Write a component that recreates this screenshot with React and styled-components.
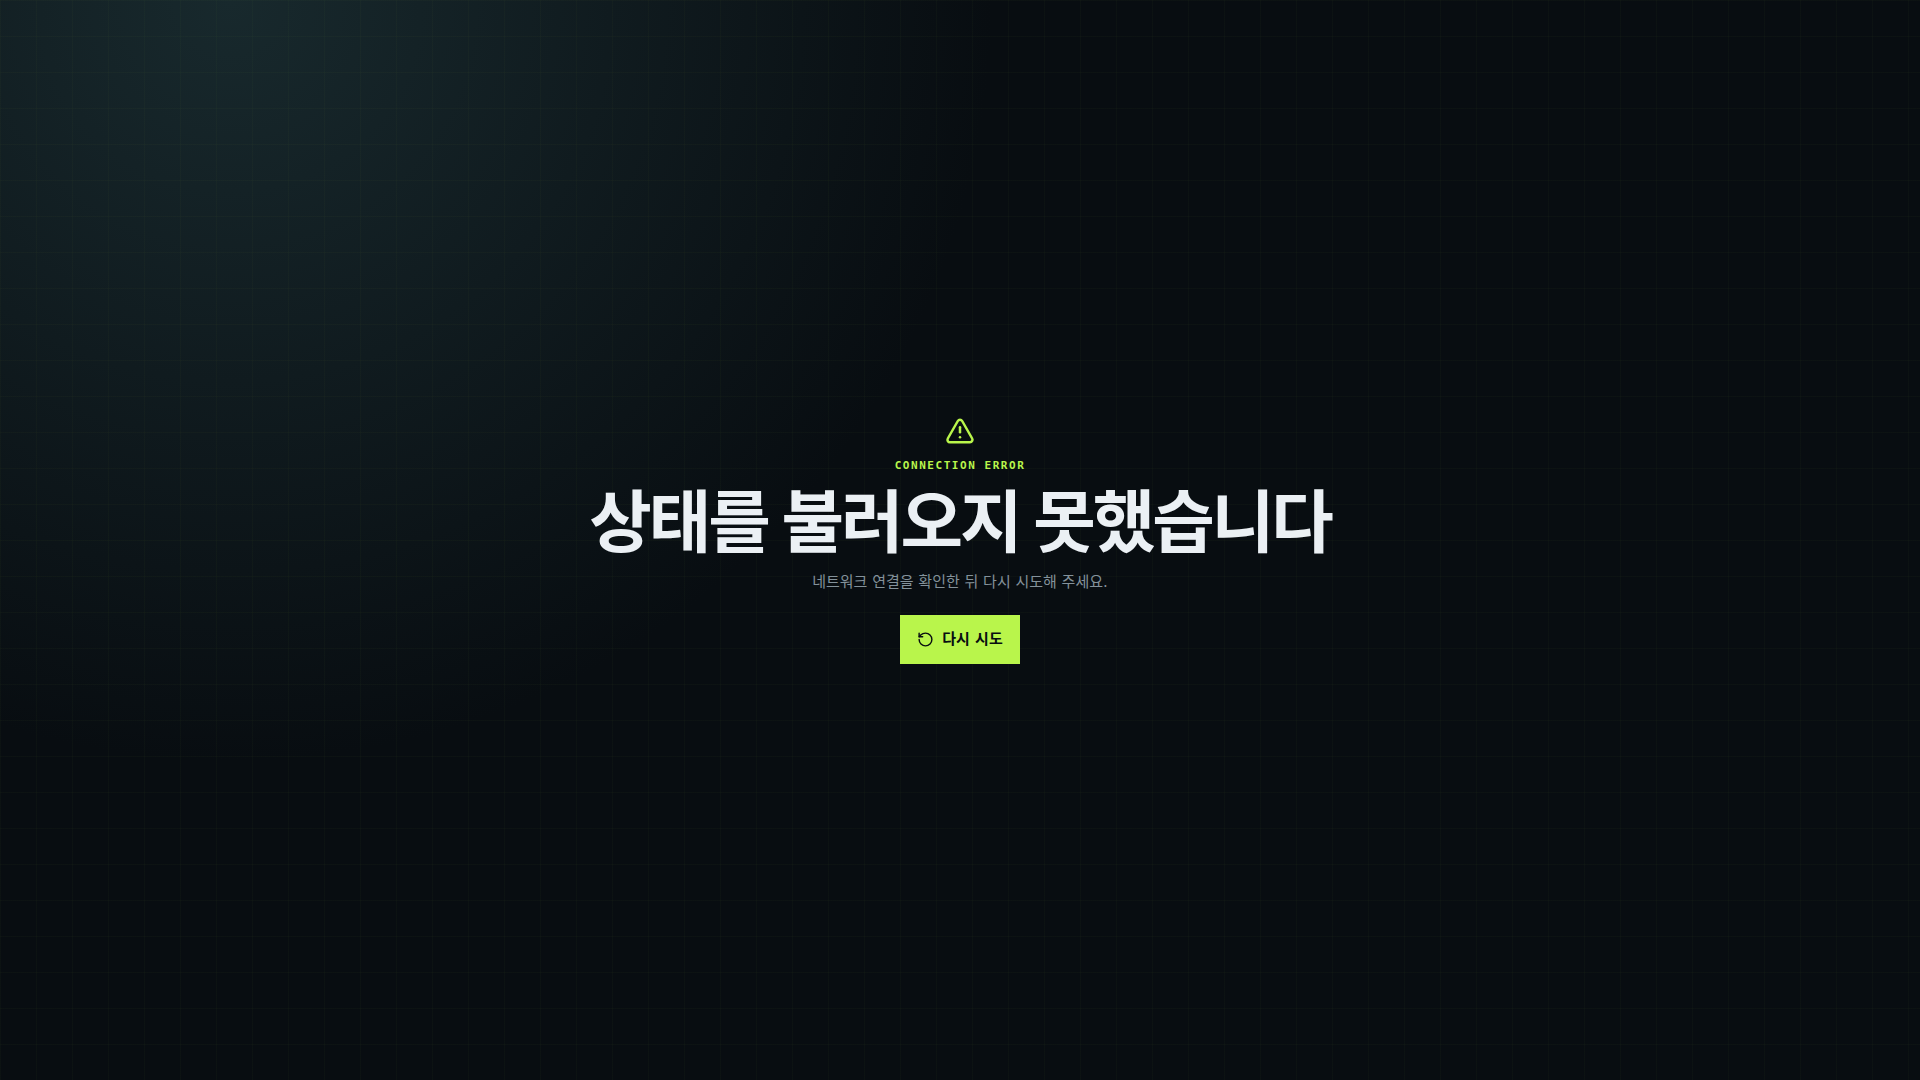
import React from 'react'
import styled, { createGlobalStyle } from 'styled-components'
import { RotateCcw, TriangleAlert } from 'lucide-react'

const App = () => {
    return (
        <>
            <GlobalStyle />
            <ErrorPage lang="ko">
                <TriangleAlert size={30} aria-hidden="true" />
                <Eyebrow>CONNECTION ERROR</Eyebrow>
                <Title>상태를 불러오지 못했습니다</Title>
                <Message>네트워크 연결을 확인한 뒤 다시 시도해 주세요.</Message>
                <RetryButton type="button" onClick={() => window.location.reload()}>
                    <RotateCcw size={17} aria-hidden="true" />
                    다시 시도
                </RetryButton>
            </ErrorPage>
        </>
    )
}

const GlobalStyle = createGlobalStyle`
    * {
        box-sizing: border-box;
    }

    body {
        margin: 0;
        background-color: #080d11;
        color: #ebf0f4;
        font-family: "DejaVu Sans", "Noto Sans CJK KR", sans-serif;
    }
`

const ErrorPage = styled.main`
    min-height: 100vh;
    padding: 24px;
    display: flex;
    flex-direction: column;
    justify-content: center;
    align-items: center;
    text-align: center;
    color: #b9f54b;
    background:
        linear-gradient(rgba(185, 245, 75, 0.025) 1px, transparent 1px) 0 0 / 36px 36px,
        linear-gradient(90deg, rgba(185, 245, 75, 0.025) 1px, transparent 1px) 0 0 / 36px 36px,
        radial-gradient(circle at 12% 0, #18292d 0, transparent 38%),
        #080d11;
`

const Eyebrow = styled.p`
    margin: 12px 0 0;
    font-family: "DejaVu Sans Mono", monospace;
    font-size: 11px;
    font-weight: 700;
    line-height: 15px;
    letter-spacing: 0.14em;
`

const Title = styled.h1`
    margin: 12px 0 8px;
    color: #ebf0f4;
    font-family: Roboto, "Noto Sans CJK KR", sans-serif;
    font-size: 68px;
    font-weight: 700;
    line-height: 78px;
    letter-spacing: -0.045em;
`

const Message = styled.p`
    margin: 0 0 22px;
    color: #83919a;
    font-size: 15px;
    line-height: 22px;
`

const RetryButton = styled.button`
    display: flex;
    align-items: center;
    gap: 8px;
    padding: 12px 16px;
    border: 1px solid #b9f54b;
    background-color: #b9f54b;
    color: #080d11;
    font-family: inherit;
    font-size: 15px;
    font-weight: 700;
    line-height: 23px;
    cursor: pointer;
`

export default App
